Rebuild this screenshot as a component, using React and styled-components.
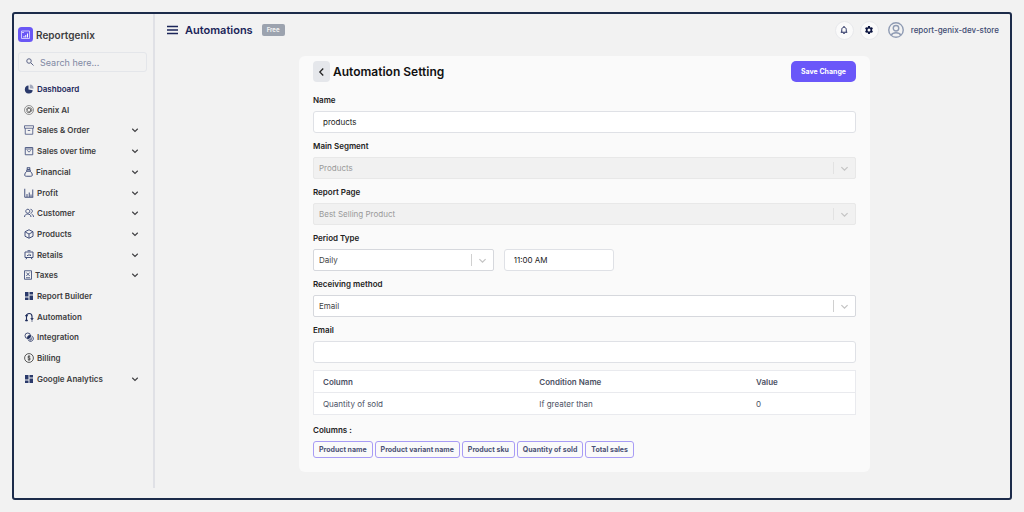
import React, { useState } from 'react';
import styled, { createGlobalStyle } from 'styled-components';

const menus = [
	{ name: 'Dashboard', icon: 'pie', active: true },
	{ name: 'Genix AI', icon: 'ai' },
	{ name: 'Sales & Order', icon: 'archive', sub: true },
	{ name: 'Sales over time', icon: 'bag', sub: true },
	{ name: 'Financial', icon: 'money', sub: true, iconWidth: 9 },
	{ name: 'Profit', icon: 'chart', sub: true },
	{ name: 'Customer', icon: 'users', sub: true },
	{ name: 'Products', icon: 'box', sub: true },
	{ name: 'Retails', icon: 'board', sub: true },
	{ name: 'Taxes', icon: 'tax', sub: true, iconWidth: 8 },
	{ name: 'Report Builder', icon: 'blocks' },
	{ name: 'Automation', icon: 'flow' },
	{ name: 'Integration', icon: 'integration' },
	{ name: 'Billing', icon: 'dollar' },
	{ name: 'Google Analytics', icon: 'blocks', sub: true },
];

const columns = ['Product name', 'Product variant name', 'Product sku', 'Quantity of sold', 'Total sales'];

const conditions = [{ column: 'Quantity of sold', condition: 'If greater than', value: 0 }];

const drawings = {
	pie: (
		<>
			<path d="M9 3a8 8 0 1 0 8.500 9.500L9 11z" fill="#2b3a6b" stroke="none" />
			<path d="M11.500 1v7.500l7.500 1A8 8 0 0 0 11.500 1z" fill="#a3a9bd" stroke="none" />
		</>
	),
	ai: (
		<g stroke="#555">
			<circle cx="10" cy="10" r="9" strokeWidth="1.200" />
			<path
				d="M10 4.500l4.500 2.700v5.500L10 15.500l-4.500-2.800V7.200zM7 4.500l6 3.500v4M4 9l6-3.500M13 4.500l3 4v4M16 11l-6 4.500M5 13l3 3 5-3M7 8l3-1.500 3 1.700v3.600l-3 1.700-3-1.700z"
				strokeWidth="1"
			/>
		</g>
	),
	archive: <path d="M1 1.500h18v5H1zM2.500 6.500v12h15v-12M7.500 11h5" />,
	bag: <path d="M2.500 3h15v14.500h-15zM2.500 6h15M7 8.500c0 4 6 4 6 0" strokeWidth="1.800" />,
	money: (
		<path
			d="M6 1.500h6l-1 4H7zM5.500 5.500h7v3h-7zM5.500 8.500C3 11 1.500 13 1.500 16c0 2 1 2.500 3 2.500h9c2 0 3-.5 3-2.500 0-3-1.500-5-4-7.500"
			strokeWidth="2"
		/>
	),
	chart: <path d="M1.500 1.500v17h17M6 18v-6M10.500 18V9M14 18v-5M17.500 18V3" strokeWidth="2" />,
	users: (
		<path
			d="M7.500 2.500a4 4 0 1 0 .1 0zM1 18c0-8 13-8 13 0M13 2.500c5 .5 5 7 0 8M15.500 12.500c2.500 1 3.500 3 3.500 5.500"
			strokeWidth="2"
		/>
	),
	box: <path d="M10 1.500l8 4v9l-8 4-8-4v-9zM2.500 6l7.500 4 7.500-4M10 10v8" strokeWidth="2" />,
	board: <path d="M2 4h16v11H2zM7 1.500h6M6 15l-2 3.500M14 15l2 3.500M7 12v-2M10 12V7.500M13 12V9" strokeWidth="2" />,
	tax: <path d="M1 1.500h14v17H1zM4.500 5l7 7M11.500 5l-7 7M4 15.500h8" strokeWidth="1.800" />,
	blocks: <path d="M2 2h7v9H2zM11 2h7v5h-7zM2 13h7v5H2zM11 9h7v9h-7z" fill="#2b3a6b" stroke="none" />,
	flow: (
		<g stroke="#1f2d5c">
			<path d="M5 16V9c0-8 11-8 11 0v5" strokeWidth="2.200" />
			<path d="M2.500 8L5 5l2.500 3zM13.500 13l2.500 3 2.500-3zM3 16h4v2H3zM14 18h4" fill="#1f2d5c" strokeWidth="1.200" />
		</g>
	),
	integration: (
		<g stroke="#1f2d5c">
			<circle cx="7.500" cy="7.500" r="5.500" strokeWidth="1.600" />
			<path d="M13 7a6 6 0 0 1-6 6c-1-4 2-7 6-6z" fill="#1f2d5c" />
			<path d="M15 8a5.500 5.500 0 1 1-7 7" strokeWidth="1.600" />
			<path d="M14 10c3 2 3 5 0 7-2 1-4 0-5-2 3-.5 4.500-2 5-5z" fill="#7780a0" stroke="none" />
		</g>
	),
	dollar: (
		<g stroke="#333">
			<circle cx="10" cy="10" r="8.800" />
			<path d="M12.700 7.500c-1-1.700-5.200-1.500-5.200.5 0 2.500 5.300 1.500 5.300 4 0 2-4.300 2.300-5.500.3M10 4.500v11" />
		</g>
	),
};

function MenuIcon({ name, width = 10 }) {
	return (
		<svg
			width={width}
			height="10"
			viewBox={`0 0 ${width * 2} 20`}
			fill="none"
			stroke="#46537f"
			strokeWidth="1.600"
			aria-hidden="true"
		>
			{drawings[name]}
		</svg>
	);
}

function Chevron({ size = 8 }) {
	return (
		<svg width={size} height={size} viewBox="0 0 16 16" fill="none" stroke="currentColor" strokeWidth="2.200" aria-hidden="true">
			<path d="M2.500 5.500L8 11l5.500-5.500" />
		</svg>
	);
}

function Sidebar() {
	return (
		<SidebarWrap>
			<Logo>
				<svg width="15" height="15" viewBox="0 0 30 30" aria-hidden="true">
					<rect width="30" height="30" rx="7" fill="#6a57f5" />
					<path d="M7 11v12h16V8H7M7 8v3h5" fill="none" stroke="#d9d4ff" strokeWidth="1.800" />
					<path d="M12 21v-3M15.500 21v-5M19 21v-8" stroke="#fff" strokeWidth="2" />
				</svg>
				Reportgenix
			</Logo>
			<Search>
				<svg width="8" height="8" viewBox="0 0 16 16" fill="none" stroke="#5b6486" strokeWidth="2" aria-hidden="true">
					<circle cx="6" cy="6" r="4.500" />
					<path d="M9.500 9.500l5.500 5.500" />
				</svg>
				<SearchInput type="search" placeholder="Search here..." aria-label="Search" />
			</Search>
			<Nav>
				{menus.map(el => {
					return (
						<MenuItem key={el.name} href="#" $active={el.active}>
							<MenuIcon name={el.icon} width={el.iconWidth} />
							<MenuName>{el.name}</MenuName>
							{el.sub && <Chevron />}
						</MenuItem>
					);
				})}
			</Nav>
		</SidebarWrap>
	);
}

function Header() {
	return (
		<HeaderWrap>
			<MenuBtn aria-label="Toggle menu">
				<svg width="12" height="10" viewBox="0 0 12 10" stroke="#1b2559" strokeWidth="1.300" aria-hidden="true">
					<path d="M1 1.500h11M1 5h11M1 8.500h11" />
				</svg>
			</MenuBtn>
			<PageTitle>Automations</PageTitle>
			<Badge>Free</Badge>
			<UserArea>
				<RoundBtn aria-label="Notifications">
					<svg width="8" height="8" viewBox="0 0 16 16" fill="none" stroke="#1b2559" strokeWidth="1.900" aria-hidden="true">
						<path d="M1.500 12.500h13M3.500 12.500V7c0-6 9-6 9 0v5.500M8 0v2" />
						<path d="M6.500 14.900h3" />
					</svg>
				</RoundBtn>
				<RoundBtn aria-label="Settings">
					<svg width="10" height="10" viewBox="0 0 24 24" fill="#0b1440" aria-hidden="true">
						<path d="M19.140 12.940c.04-.3.06-.61.06-.94 0-.32-.02-.64-.07-.94l2.030-1.580a.49.49 0 0 0 .12-.61l-1.920-3.320a.488.488 0 0 0-.59-.22l-2.390.96c-.5-.38-1.030-.7-1.620-.94l-.36-2.540a.484.484 0 0 0-.48-.41h-3.840c-.24 0-.43.17-.47.41l-.36 2.540c-.59.24-1.130.57-1.620.94l-2.390-.96c-.22-.08-.47 0-.59.22L2.740 8.870c-.12.21-.08.47.12.61l2.030 1.580c-.05.3-.09.63-.09.94s.02.64.07.94l-2.030 1.580a.49.49 0 0 0-.12.61l1.920 3.320c.12.22.37.29.59.22l2.390-.96c.5.38 1.030.7 1.620.94l.36 2.540c.05.24.24.41.48.41h3.840c.24 0 .44-.17.47-.41l.36-2.540c.59-.24 1.130-.56 1.620-.94l2.390.96c.22.08.47 0 .59-.22l1.920-3.320c.12-.22.07-.47-.12-.61zM12 15.600a3.600 3.600 0 1 1 0-7.200 3.600 3.600 0 0 1 0 7.200z" />
					</svg>
				</RoundBtn>
				<User href="#">
					<svg width="16" height="16" viewBox="0 0 32 32" fill="none" stroke="#8f9bb3" strokeWidth="2.800" aria-hidden="true">
						<circle cx="16" cy="16" r="14.500" />
						<circle cx="16" cy="12.500" r="5.500" />
						<path d="M6.500 26.500c3-6.500 16-6.500 19 0" />
					</svg>
					report-genix-dev-store
				</User>
			</UserArea>
		</HeaderWrap>
	);
}

function SelectField({ id, options, disabled }) {
	return (
		<SelectBox $disabled={disabled}>
			<Select id={id} disabled={disabled}>
				{options.map(el => (
					<option key={el}>{el}</option>
				))}
			</Select>
			<Indicator $disabled={disabled}>
				<Chevron size={9} />
			</Indicator>
		</SelectBox>
	);
}

function App() {
	const [name, setName] = useState('products');
	const [time, setTime] = useState('11:00 AM');
	const [email, setEmail] = useState('');

	return (
		<>
			<GlobalStyle />
			<Frame>
				<Sidebar />
				<Main>
					<Header />
					<Content>
						<Card>
							<CardHeader>
								<BackBtn aria-label="Back">
									<svg width="10" height="10" viewBox="0 0 16 16" fill="none" stroke="#222" strokeWidth="2" aria-hidden="true">
										<path d="M10 2.500L4.500 8l5.500 5.500" />
									</svg>
								</BackBtn>
								<CardTitle>Automation Setting</CardTitle>
								<SaveBtn>Save Change</SaveBtn>
							</CardHeader>
							<Form>
								<Field>
									<Label htmlFor="name">Name</Label>
									<Input id="name" value={name} onChange={e => setName(e.target.value)} />
								</Field>
								<Field>
									<Label htmlFor="segment">Main Segment</Label>
									<SelectField id="segment" options={['Products']} disabled />
								</Field>
								<Field>
									<Label htmlFor="page">Report Page</Label>
									<SelectField id="page" options={['Best Selling Product']} disabled />
								</Field>
								<Field>
									<Label htmlFor="period">Period Type</Label>
									<Period>
										<SelectField id="period" options={['Daily', 'Weekly', 'Monthly']} />
										<Input aria-label="Time" value={time} onChange={e => setTime(e.target.value)} />
									</Period>
								</Field>
								<Field>
									<Label htmlFor="method">Receiving method</Label>
									<SelectField id="method" options={['Email']} />
								</Field>
								<Field>
									<Label htmlFor="email">Email</Label>
									<Input id="email" type="email" value={email} onChange={e => setEmail(e.target.value)} />
								</Field>
							</Form>
							<Table>
								<thead>
									<tr>
										<Th $width="40%">Column</Th>
										<Th $width="40%">Condition Name</Th>
										<Th>Value</Th>
									</tr>
								</thead>
								<tbody>
									{conditions.map(el => (
										<tr key={el.column}>
											<Td>{el.column}</Td>
											<Td>{el.condition}</Td>
											<Td>{el.value}</Td>
										</tr>
									))}
								</tbody>
							</Table>
							<ColumnsTitle>Columns :</ColumnsTitle>
							<Chips>
								{columns.map(el => (
									<Chip key={el}>{el}</Chip>
								))}
							</Chips>
						</Card>
					</Content>
				</Main>
			</Frame>
		</>
	);
}

export default App;

const GlobalStyle = createGlobalStyle`
	* {
		box-sizing: border-box;
	}
	body {
		margin: 0;
		padding: 12px;
		background-color: #f2f2f2;
		color: #222;
		font-family: Inter, 'Liberation Sans', sans-serif;
		font-size: 8px;
	}
	a {
		color: inherit;
		text-decoration: none;
	}
	button, input, select {
		font-family: inherit;
		font-size: inherit;
		color: inherit;
	}
	svg {
		flex-shrink: 0;
	}
`;
const Frame = styled.div`
	display: flex;
	min-height: calc(100vh - 24px);
	padding-bottom: 10px;
	border: 2px solid #1c2b4a;
	border-radius: 3px;
`;
const SidebarWrap = styled.aside`
	flex: 0 0 141px;
	min-width: 0;
	padding: 13px 6px 0 4px;
	border-right: 2px solid #e0e1e6;
`;
const Logo = styled.div`
	display: flex;
	align-items: center;
	gap: 3px;
	height: 15px;
	font-size: 10px;
	font-weight: 600;
	color: #3d3d40;
`;
const Search = styled.div`
	display: flex;
	align-items: center;
	gap: 6px;
	height: 20px;
	margin-top: 10px;
	padding: 0 7px;
	border: 1px solid #e4e6ea;
	border-radius: 3px;
`;
const SearchInput = styled.input`
	width: 100%;
	min-width: 0;
	padding: 0;
	border: none;
	outline: none;
	background: none;
	font-size: 9px;
	&::placeholder {
		color: #8189a3;
	}
`;
const Nav = styled.nav`
	display: flex;
	flex-direction: column;
	justify-content: space-between;
	height: 310px;
	margin-top: 7px;
	padding: 0 8px 0 6px;
`;
const MenuItem = styled.a`
	display: flex;
	align-items: center;
	gap: 3px;
	height: 20px;
	font-weight: 600;
	color: ${({ $active }) => ($active ? '#1b2559' : '#3d3d40')};
`;
const MenuName = styled.span`
	flex: 1;
`;
const Main = styled.main`
	flex: 1;
	min-width: 0;
`;
const HeaderWrap = styled.header`
	display: flex;
	align-items: center;
	height: 32px;
	padding: 0 11px;
`;
const MenuBtn = styled.button`
	display: flex;
	padding: 0;
	border: none;
	background: none;
	cursor: pointer;
`;
const PageTitle = styled.h1`
	margin: 0 0 0 7px;
	font-size: 11px;
	font-weight: 600;
	color: #1b2559;
`;
const Badge = styled.span`
	margin-left: 9px;
	padding: 0 5px;
	border-radius: 2px;
	background-color: #9ca3af;
	font-size: 6px;
	font-weight: 700;
	line-height: 12px;
	color: #f2f2f2;
`;
const UserArea = styled.div`
	display: flex;
	align-items: center;
	gap: 6px;
	margin-left: auto;
`;
const RoundBtn = styled.button`
	display: flex;
	align-items: center;
	justify-content: center;
	width: 19px;
	height: 19px;
	padding: 0;
	border: 1px solid #e8e9ec;
	border-radius: 50%;
	background-color: #fafafa;
	cursor: pointer;
`;
const User = styled.a`
	display: flex;
	align-items: center;
	gap: 7px;
	margin-left: 3px;
	font-weight: 500;
	color: #414b73;
`;
const Content = styled.div`
	padding: 10px 140px 0 144px;
`;
const Card = styled.section`
	padding: 5px 14px 14px;
	border-radius: 6px;
	background-color: #fafafa;
`;
const CardHeader = styled.div`
	display: flex;
	align-items: center;
	gap: 3px;
`;
const CardTitle = styled.h2`
	margin: 0;
	font-size: 12px;
	font-weight: 600;
	color: #111;
`;
const BackBtn = styled.button`
	display: flex;
	align-items: center;
	justify-content: center;
	width: 17px;
	height: 21px;
	padding: 0;
	border: none;
	border-radius: 4px;
	background-color: #e5e7eb;
	cursor: pointer;
`;
const SaveBtn = styled.button`
	height: 21px;
	margin-left: auto;
	padding: 0 10px;
	border: none;
	border-radius: 5px;
	background-color: #6a57f9;
	font-size: 7px;
	font-weight: 700;
	color: #fff;
	cursor: pointer;
`;
const Form = styled.form`
	display: grid;
	gap: 6px;
	margin-top: 11px;
`;
const Field = styled.div`
	display: grid;
	gap: 4px;
`;
const Label = styled.label`
	font-weight: 600;
	line-height: 14px;
`;
const Input = styled.input`
	width: 100%;
	height: 22px;
	padding: 0 9px;
	border: 1px solid #dfe1e6;
	border-radius: 3px;
	background-color: #fff;
	outline: none;
`;
const SelectBox = styled.div`
	display: flex;
	align-items: center;
	height: 22px;
	border: 1px solid ${({ $disabled }) => ($disabled ? '#e8e8e8' : '#d6d8dd')};
	border-radius: 2px;
	background-color: ${({ $disabled }) => ($disabled ? '#f1f1f1' : '#fff')};
`;
const Select = styled.select`
	flex: 1;
	height: 20px;
	padding: 0 5px;
	border: none;
	outline: none;
	appearance: none;
	background: none;
	color: #444;
	&:disabled {
		color: #999;
		opacity: 1;
	}
`;
const Indicator = styled.span`
	display: flex;
	align-items: center;
	justify-content: center;
	width: 22px;
	height: 12px;
	border-left: 1px solid ${({ $disabled }) => ($disabled ? '#e2e2e2' : '#d0d0d0')};
	color: #c4c4c4;
	pointer-events: none;
`;
const Period = styled.div`
	display: grid;
	grid-template-columns: 7fr 110px 9fr;
	gap: 10px;
`;
const Table = styled.table`
	width: 100%;
	margin-top: 7px;
	table-layout: fixed;
	border-collapse: collapse;
	border: 1px solid #e9eaee;
	background-color: #fff;
	color: #4b5163;
`;
const Th = styled.th`
	width: ${({ $width }) => $width || 'auto'};
	height: 22px;
	padding: 0 9px;
	border-bottom: 1px solid #e9eaee;
	text-align: left;
	font-weight: 600;
`;
const Td = styled.td`
	height: 22px;
	padding: 0 9px;
`;
const ColumnsTitle = styled.h3`
	margin: 8px 0 0;
	font-size: 8px;
	font-weight: 600;
	line-height: 14px;
`;
const Chips = styled.ul`
	display: flex;
	flex-wrap: wrap;
	gap: 2px;
	margin: 4px 0 0;
	padding: 0;
	list-style: none;
`;
const Chip = styled.li`
	padding: 0 5px;
	border: 1px solid #a89cf5;
	border-radius: 3px;
	font-size: 7px;
	font-weight: 700;
	line-height: 15px;
	color: #4b5175;
`;
